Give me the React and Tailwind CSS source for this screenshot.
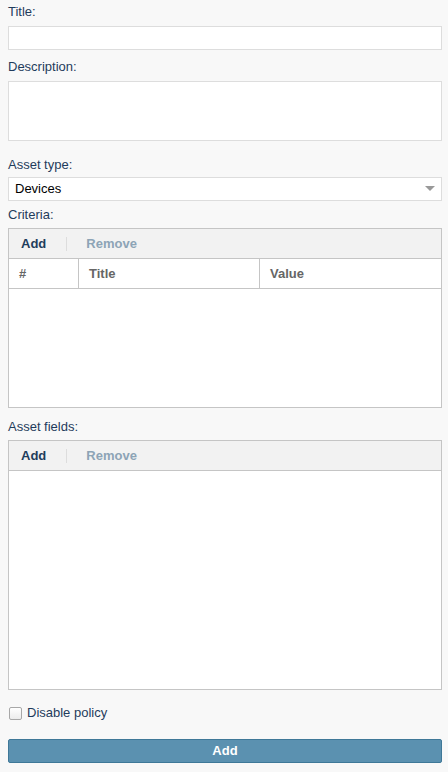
import React from "react";

// Policy form: inputs, two grids with toolbars, checkbox and submit
const font = { fontFamily: '"Liberation Sans", Arial, sans-serif' };

function Label({ children, className = "" }) {
  return (
    <div className={`text-[13px] leading-[14px] text-[#1f3c5c] ${className}`}>{children}</div>
  );
}

function Toolbar() {
  return (
    <div className="h-[30px] shrink-0 bg-[#f2f2f2] border-b border-[#c5c5c5] flex items-center text-[13px] font-bold">
      <span className="ml-[12px] text-[#1f3d5c]">Add</span>
      <span className="ml-[20px] w-px h-[14px] bg-[#dddddd]" />
      <span className="ml-[19px] text-[#8da4b6]">Remove</span>
    </div>
  );
}

export default function App() {
  return (
    <div style={font} className="w-[448px] h-[772px] bg-[#f8f8f8] px-2 pt-[5px] overflow-hidden">
      <Label>Title:</Label>
      <div className="mt-[7px] h-[24px] w-[434px] bg-white border border-[#dddddd]" />

      <Label className="mt-[10px]">Description:</Label>
      <div className="mt-[7px] h-[60px] w-[434px] bg-white border border-[#dddddd]" />

      <Label className="mt-[17px]">Asset type:</Label>
      <div className="mt-[5px] h-[24px] w-[434px] bg-white border border-[#dddddd] flex items-center justify-between pl-[6px] pr-[6px]">
        <span className="text-[13px] text-black">Devices</span>
        <svg width="10" height="6" viewBox="0 0 10 6">
          <path d="M0 0 H10 L5 5 Z" fill="#999999" />
        </svg>
      </div>

      <Label className="mt-[7px]">Criteria:</Label>
      <div className="mt-[6px] h-[180px] w-[434px] bg-white border border-[#c5c5c5] flex flex-col">
        <Toolbar />
        <div className="h-[30px] shrink-0 border-b border-[#c5c5c5] flex text-[13px] font-bold text-[#666666]">
          <div className="w-[70px] border-r border-[#c5c5c5] flex items-center pl-[10px]">#</div>
          <div className="w-[181px] border-r border-[#c5c5c5] flex items-center pl-[10px]">Title</div>
          <div className="flex-1 flex items-center pl-[10px]">Value</div>
        </div>
      </div>

      <Label className="mt-[12px]">Asset fields:</Label>
      <div className="mt-[6px] h-[250px] w-[434px] bg-white border border-[#c5c5c5] flex flex-col">
        <Toolbar />
      </div>

      <div className="mt-[16px] flex items-center">
        <span className="ml-px w-[13px] h-[13px] rounded-[2px] border border-[#a8a8a8] bg-gradient-to-b from-white to-[#ececec]" />
        <span className="ml-[5px] text-[13px] leading-[14px] text-[#1f3c5c]">Disable policy</span>
      </div>

      <button className="mt-[19px] h-[24px] w-[434px] rounded-[2px] bg-[#5b91b0] border border-[#3f7898] text-white text-[13px] font-bold flex items-center justify-center">
        Add
      </button>
    </div>
  );
}
